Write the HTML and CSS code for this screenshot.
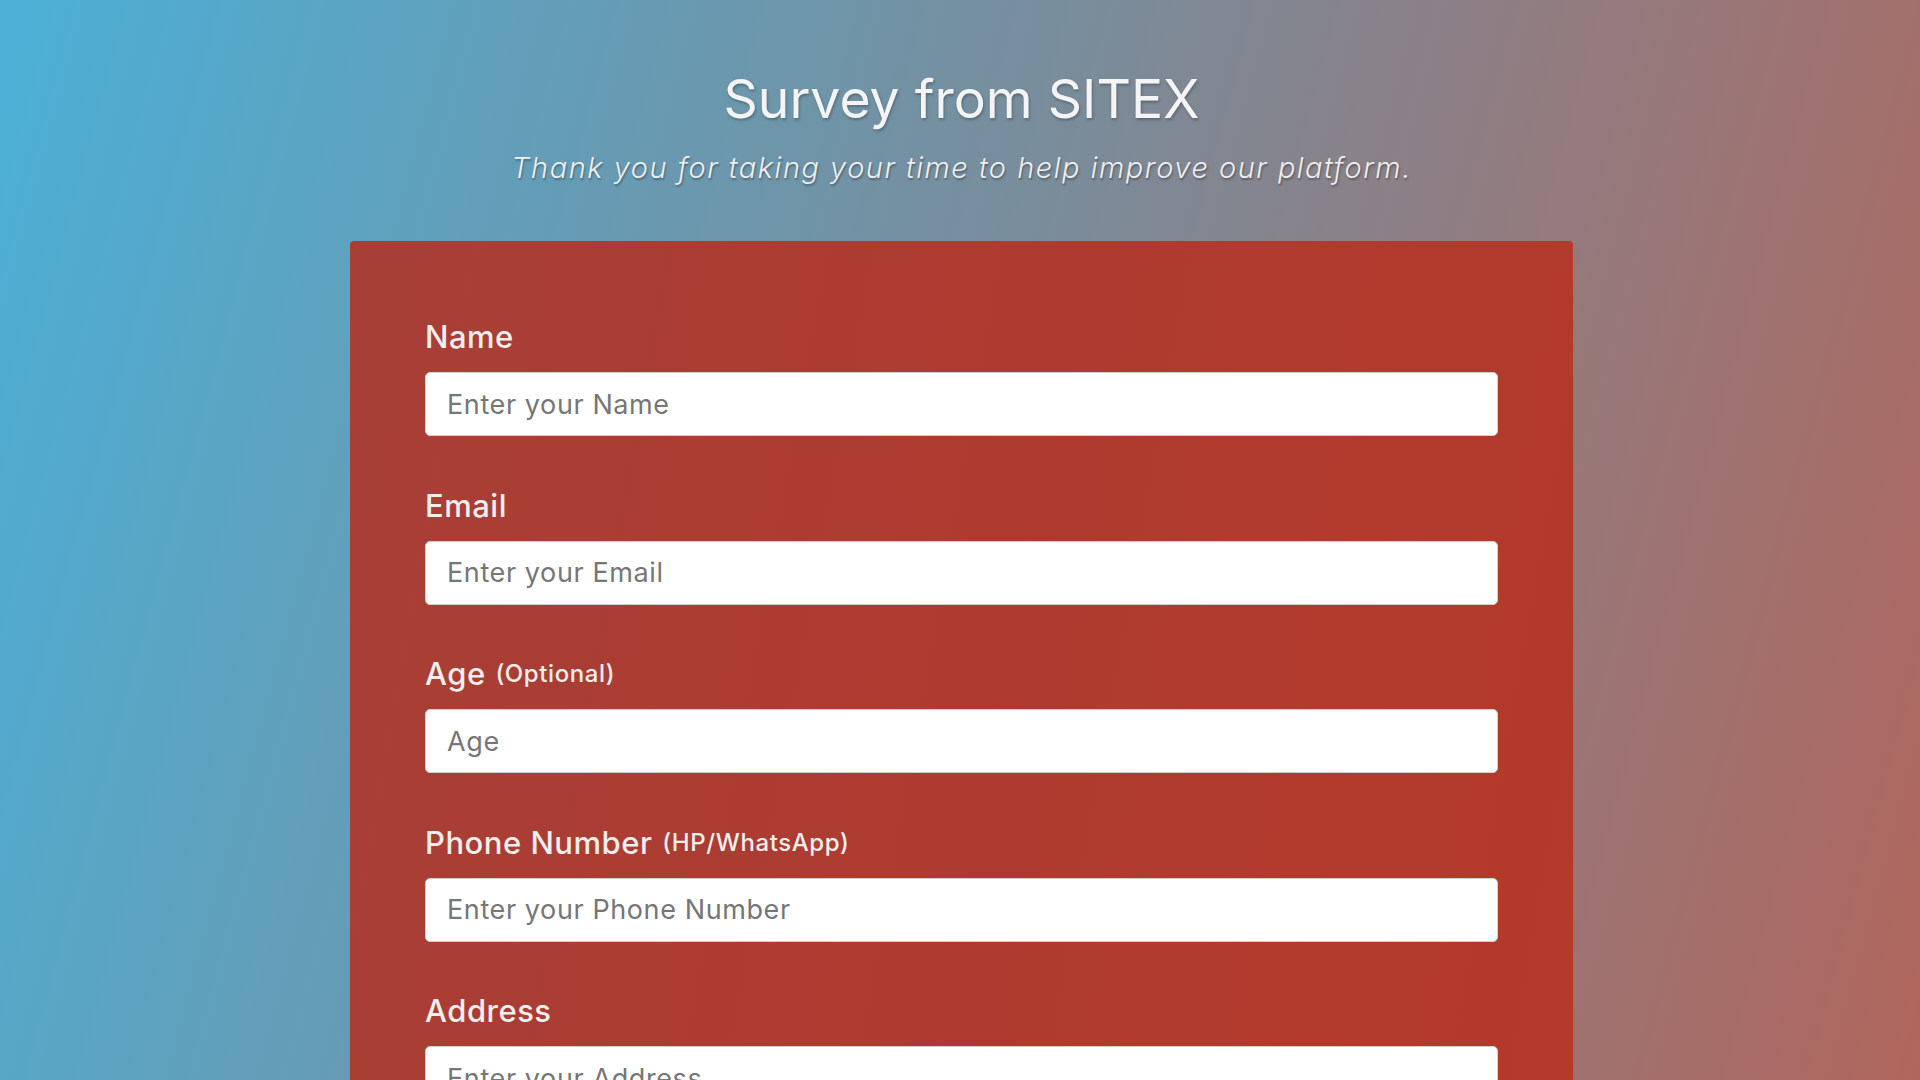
FILE: index.html
```html
<!DOCTYPE html>
<html lang="en">
<head>
<meta charset="utf-8">
<title>Survey from SITEX</title>
<link rel="stylesheet" href="styles.css">
</head>
<body>
<div class="page">
  <header class="hero">
    <h1 class="title">Survey from SITEX</h1>
    <p class="subtitle">Thank you for taking your time to help improve our platform.</p>
  </header>
  <main class="card">
    <form class="form">
      <div class="field">
        <label class="label" for="name">Name</label>
        <input class="input" id="name" type="text" placeholder="Enter your Name">
      </div>
      <div class="field">
        <label class="label" for="email">Email</label>
        <input class="input" id="email" type="email" placeholder="Enter your Email">
      </div>
      <div class="field">
        <label class="label" for="age">Age <span class="hint">(Optional)</span></label>
        <input class="input" id="age" type="number" placeholder="Age">
      </div>
      <div class="field">
        <label class="label" for="phone">Phone Number <span class="hint">(HP/WhatsApp)</span></label>
        <input class="input" id="phone" type="text" placeholder="Enter your Phone Number">
      </div>
      <div class="field">
        <label class="label" for="address">Address</label>
        <input class="input" id="address" type="text" placeholder="Enter your Address">
      </div>
    </form>
  </main>
</div>
</body>
</html>
```

FILE: styles.css
```css
* {
  box-sizing: border-box;
}

html, body {
  margin: 0;
  padding: 0;
  height: 100%;
  overflow: hidden;
}

body {
  font-family: "Inter", "Noto Sans", sans-serif;
  background: linear-gradient(105deg, #4bb0d6 0%, #7a8c9a 50%, #b0665c 100%);
  color: #f3f3f3;
}

.page {
  min-height: 1080px;
  padding: 67px 0 0 3px;
}

.hero {
  text-align: center;
}

.title {
  margin: 0;
  font-size: 53.5px;
  line-height: 64px;
  font-weight: 400;
  color: #f4f4f4;
  text-shadow: 1px 2px 3px rgba(0, 0, 0, 0.25);
}

.subtitle {
  margin: 17px 0 0;
  font-size: 29px;
  line-height: 40px;
  font-weight: 300;
  font-style: italic;
  letter-spacing: 1.5px;
  color: #eeeeee;
  text-shadow: 1px 2px 2px rgba(0, 0, 0, 0.3);
}

.card {
  width: 1223px;
  margin: 53px auto 0;
  padding: 76px 75px 40px;
  border-radius: 4px;
  background: linear-gradient(100deg, #a73f36 0%, #ae3b30 50%, #b43a2a 100%);
}

.form {
  display: flex;
  flex-direction: column;
}

.field {
  display: flex;
  flex-direction: column;
  margin-bottom: 49.5px;
}

.label {
  display: block;
  font-size: 31px;
  line-height: 40px;
  font-weight: 500;
  letter-spacing: 0.5px;
  color: #f1eeee;
  margin-bottom: 15px;
}

.hint {
  font-size: 24px;
  line-height: 1;
  letter-spacing: 0.6px;
  position: relative;
  top: -3px;
  margin-left: 1px;
}

.input {
  width: 100%;
  height: 64px;
  padding: 0 21px;
  border: 1px solid #cfcfcf;
  border-radius: 5px;
  background: #ffffff;
  font-family: "Inter", "Noto Sans", sans-serif;
  font-size: 27px;
  letter-spacing: 0.6px;
  color: #333;
  outline: none;
}

.input::placeholder {
  color: #767676;
}
```
